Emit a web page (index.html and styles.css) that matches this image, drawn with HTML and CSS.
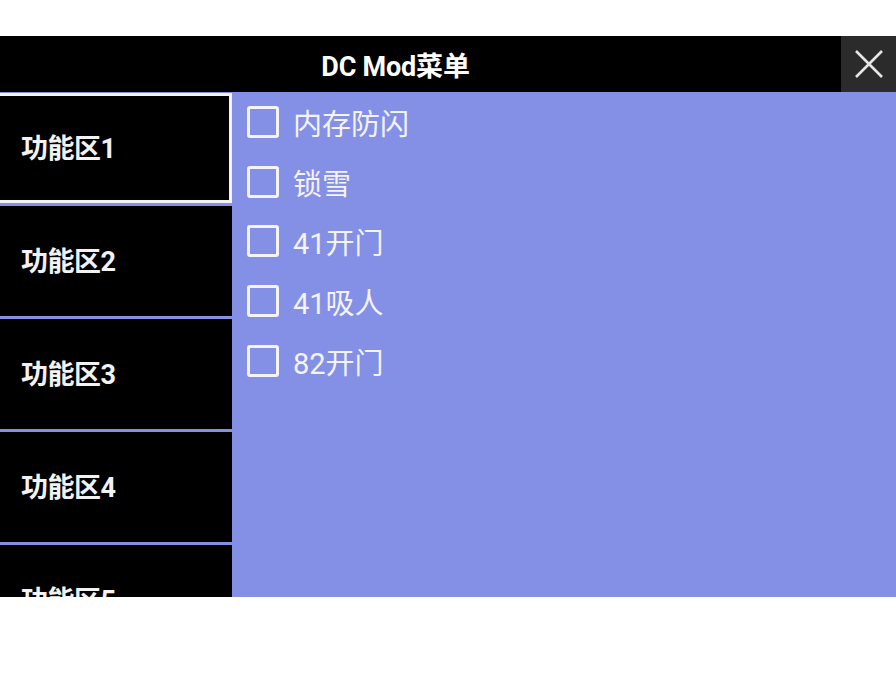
FILE: index.html
```html
<!DOCTYPE html>
<html lang="zh">
<head>
    <meta charset="UTF-8">
    <meta name="viewport" content="width=device-width, initial-scale=1.0">
    <title>DC Mod菜单</title>
    <link rel="stylesheet" href="styles.css">
</head>
<body>
    <div class="menu">
        <div class="menu-header">
            <div class="menu-title">DC Mod菜单</div>
            <button class="close-btn" aria-label="关闭">
                <svg width="30" height="30" viewBox="0 0 30 30">
                    <path d="M2 2 L28 28 M28 2 L2 28" stroke="#e6e6e6" stroke-width="2.6" fill="none"/>
                </svg>
            </button>
        </div>

        <div class="menu-body">
            <div class="tabs">
                <div class="tab active">功能区1</div>
                <div class="tab">功能区2</div>
                <div class="tab">功能区3</div>
                <div class="tab">功能区4</div>
                <div class="tab">功能区5</div>
            </div>

            <div class="options">
                <label class="option"><span class="check"></span>内存防闪</label>
                <label class="option"><span class="check"></span>锁雪</label>
                <label class="option"><span class="check"></span>41开门</label>
                <label class="option"><span class="check"></span>41吸人</label>
                <label class="option"><span class="check"></span>82开门</label>
            </div>
        </div>
    </div>
</body>
</html>
```

FILE: styles.css
```css
body {
    margin: 0;
    background: #fff;
    font-family: Roboto, "Noto Sans CJK SC", sans-serif;
}

.menu {
    margin-top: 36px;
    width: 896px;
}

.menu-header {
    display: flex;
    align-items: center;
    height: 56px;
    background: #000;
}

.menu-title {
    flex: 1;
    text-align: center;
    color: #fff;
    font-size: 27px;
    font-weight: bold;
    padding-right: 50px;
    letter-spacing: -0.2px;
}

.close-btn {
    width: 55px;
    height: 56px;
    border: none;
    padding: 0;
    background: #2c2b2b;
    display: flex;
    align-items: center;
    justify-content: center;
}

.menu-body {
    display: flex;
    height: 505px;
    overflow: hidden;
    background: #8490e6;
}

.tabs {
    width: 232px;
    display: flex;
    flex-direction: column;
    gap: 3px;
    padding-top: 1px;
}

.tab {
    flex: none;
    height: 110px;
    box-sizing: border-box;
    background: #000;
    color: #f2f2f2;
    font-size: 27px;
    font-weight: bold;
    display: flex;
    align-items: center;
    padding: 0 0 4px 21px;
    letter-spacing: -0.5px;
}

.tab.active {
    border: 3px solid #f4f4f4;
    border-left: none;
}

.options {
    flex: 1;
    padding: 0 0 0 15px;
    display: flex;
    flex-direction: column;
}

.option {
    height: 59.7px;
    display: flex;
    align-items: center;
    color: #f4f4f8;
    font-size: 29px;
}

.check {
    width: 26px;
    height: 26px;
    border: 3px solid #f4f4f8;
    border-radius: 3px;
    margin-right: 14px;
}
```
